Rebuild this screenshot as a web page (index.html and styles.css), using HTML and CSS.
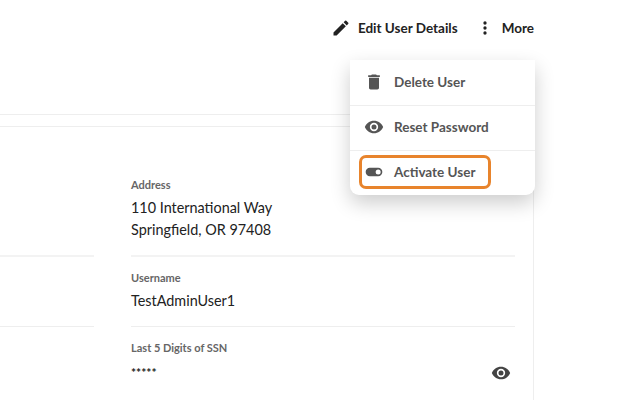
FILE: index.html
```html
<!DOCTYPE html>
<html lang="en">
<head>
  <meta charset="UTF-8">
  <title>User Details</title>
  <link rel="stylesheet" href="styles.css">
</head>
<body>
<div class="page">
  <div class="topbar">
    <a class="action">
      <svg class="icon" viewBox="0 0 24 24"><path d="M3 17.25V21h3.75L17.81 9.94l-3.75-3.75L3 17.25zM20.71 7.04a1 1 0 0 0 0-1.41l-2.34-2.34a1 1 0 0 0-1.41 0l-1.83 1.83 3.75 3.75 1.83-1.83z"/></svg>
      Edit User Details
    </a>
    <a class="action">
      <svg class="icon" viewBox="0 0 24 24"><path d="M12 8a2 2 0 1 0 0-4 2 2 0 0 0 0 4zm0 2a2 2 0 1 0 0 4 2 2 0 0 0 0-4zm0 6a2 2 0 1 0 0 4 2 2 0 0 0 0-4z"/></svg>
      More
    </a>
  </div>

  <div class="rule"></div>

  <div class="panel">
    <div class="col-left">
      <div class="field field-address"></div>
      <div class="field field-username"></div>
    </div>
    <div class="col-right">
      <div class="field field-address">
        <div class="label">Address</div>
        <div class="value">110 International Way<br>Springfield, OR 97408</div>
      </div>
      <div class="field field-username">
        <div class="label">Username</div>
        <div class="value">TestAdminUser1</div>
      </div>
      <div class="field field-ssn">
        <div class="label">Last 5 Digits of SSN</div>
        <div class="secret">
          <span class="stars">*****</span>
          <svg class="icon eye" viewBox="0 0 24 24"><path d="M12 4.5C7 4.5 2.73 7.61 1 12c1.73 4.39 6 7.5 11 7.5s9.27-3.11 11-7.5c-1.73-4.39-6-7.5-11-7.5zM12 17a5 5 0 1 1 0-10 5 5 0 0 1 0 10zm0-8a3 3 0 1 0 0 6 3 3 0 0 0 0-6z"/></svg>
        </div>
      </div>
    </div>
  </div>

  <div class="menu">
    <a class="menu-item">
      <svg class="icon" viewBox="0 0 24 24"><path d="M6 19c0 1.1.9 2 2 2h8c1.1 0 2-.9 2-2V7H6v12zM19 4h-3.5l-1-1h-5l-1 1H5v2h14V4z"/></svg>
      Delete User
    </a>
    <a class="menu-item">
      <svg class="icon" viewBox="0 0 24 24"><path d="M12 4.5C7 4.5 2.73 7.61 1 12c1.73 4.39 6 7.5 11 7.5s9.27-3.11 11-7.5c-1.73-4.39-6-7.5-11-7.5zM12 17a5 5 0 1 1 0-10 5 5 0 0 1 0 10zm0-8a3 3 0 1 0 0 6 3 3 0 0 0 0-6z"/></svg>
      Reset Password
    </a>
    <a class="menu-item focused">
      <svg class="icon" viewBox="0 0 24 24"><path d="M17 7H7a5 5 0 0 0 0 10h10a5 5 0 0 0 0-10zm0 8a3 3 0 1 1 0-6 3 3 0 0 1 0 6z"/></svg>
      Activate User
    </a>
  </div>
</div>
</body>
</html>
```

FILE: styles.css
```css
* {
    box-sizing: border-box;
}

body {
    margin: 0;
    height: 400px;
    overflow: hidden;
    background-color: #fff;
    color: #222;
    font-family: "Lato", "Liberation Sans", sans-serif;
}

.page {
    position: relative;
    width: 640px;
    height: 400px;
    overflow: hidden;
}

.icon {
    width: 20px;
    height: 20px;
    fill: currentColor;
    flex: none;
}

.topbar {
    display: flex;
    justify-content: flex-end;
    gap: 17px;
    width: 534px;
    height: 114px;
    padding-top: 18px;
}

.action {
    display: flex;
    align-items: center;
    gap: 7px;
    height: 20px;
    font-size: 13.5px;
    font-weight: 700;
    color: #222;
}

.rule {
    width: 534px;
    height: 12px;
    border-top: 1px solid #eee;
}

.panel {
    display: grid;
    grid-template-columns: 94px 1fr;
    column-gap: 37px;
    width: 534px;
    height: 274px;
    padding-right: 18px;
    border-top: 1px solid #eee;
    border-right: 1px solid #eee;
}

.field {
    border-bottom: 1px solid #eee;
}

.field-address {
    height: 130px;
    padding-top: 51px;
    border-bottom: 2px solid #f3f3f3;
}

.field-username {
    height: 70px;
    padding-top: 14px;
}

.field-ssn {
    padding-top: 14px;
    border-bottom: 0;
}

.label {
    font-size: 11px;
    font-weight: 700;
    line-height: 14px;
    color: #666;
}

.value {
    margin-top: 5px;
    font-size: 14.4px;
    line-height: 22px;
    color: #222;
}

.secret {
    display: flex;
    justify-content: space-between;
    align-items: center;
    margin-top: 8px;
    padding-right: 4px;
}

.stars {
    margin-top: -1px;
    font-size: 12px;
    font-weight: 700;
    line-height: 20px;
    color: #222;
}

.eye {
    color: #444;
}

.menu {
    position: absolute;
    left: 350px;
    top: 60px;
    width: 185px;
    background-color: #fff;
    border-radius: 0 0 9px 9px;
    box-shadow: 0 8px 20px rgba(0, 0, 0, 0.2);
}

.menu-item {
    display: flex;
    align-items: center;
    gap: 10px;
    height: 45px;
    padding-left: 14px;
    padding-bottom: 2px;
    font-size: 13.5px;
    font-weight: 700;
    color: #555;
    border-bottom: 1px solid #eee;
}

.menu-item:first-child {
    height: 46px;
}

.focused {
    width: 132px;
    height: 34px;
    margin: 4px 0 6px 9px;
    padding-left: 2px;
    padding-bottom: 0;
    border: 3px solid #e8842c;
    border-radius: 7px;
}
```
